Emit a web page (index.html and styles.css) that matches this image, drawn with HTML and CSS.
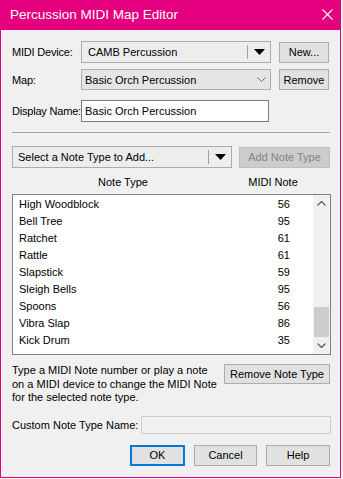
FILE: index.html
```html
<!DOCTYPE html>
<html lang="en">
<head>
    <meta charset="UTF-8">
    <title>Percussion MIDI Map Editor</title>
    <link rel="stylesheet" href="styles.css">
</head>
<body>

    <div class="window">
        <div class="titlebar">
            <span class="title">Percussion MIDI Map Editor</span>
            <svg class="close" width="11" height="11" viewBox="0 0 11 11">
                <path d="M0.5 0.5 L10.5 10.5 M10.5 0.5 L0.5 10.5" stroke="#fff" stroke-width="1.1" fill="none"/>
            </svg>
        </div>

        <div class="content">
            <div class="row row-device">
                <span class="field-label">MIDI Device:</span>
                <div class="combo combo-split combo-device">
                    <span class="combo-text">CAMB Percussion</span>
                    <span class="split-arrow">
                        <svg width="11" height="6" viewBox="0 0 11 6"><path d="M0 0 H11 L5.5 6 Z" fill="#000"/></svg>
                    </span>
                </div>
                <button class="btn btn-side">New...</button>
            </div>

            <div class="row row-map">
                <span class="field-label">Map:</span>
                <div class="combo combo-map">
                    <span class="combo-text">Basic Orch Percussion</span>
                    <svg class="chevron" width="9" height="5" viewBox="0 0 9 5"><path d="M0.5 0.5 L4.5 4.5 L8.5 0.5" stroke="#707070" stroke-width="1" fill="none"/></svg>
                </div>
                <button class="btn btn-side">Remove</button>
            </div>

            <div class="row row-name">
                <span class="field-label">Display Name:</span>
                <div class="textbox textbox-name">Basic Orch Percussion</div>
            </div>

            <div class="separator"></div>

            <div class="row row-add">
                <div class="combo combo-split combo-notetype">
                    <span class="combo-text">Select a Note Type to Add...</span>
                    <span class="split-arrow">
                        <svg width="11" height="6" viewBox="0 0 11 6"><path d="M0 0 H11 L5.5 6 Z" fill="#000"/></svg>
                    </span>
                </div>
                <button class="btn btn-add" disabled>Add Note Type</button>
            </div>

            <div class="list-header">
                <span class="col-name">Note Type</span>
                <span class="col-note">MIDI Note</span>
            </div>

            <div class="listbox">
                <div class="list-rows">
                    <div class="item"><span class="item-name">High Woodblock</span><span class="item-note">56</span></div>
                    <div class="item"><span class="item-name">Bell Tree</span><span class="item-note">95</span></div>
                    <div class="item"><span class="item-name">Ratchet</span><span class="item-note">61</span></div>
                    <div class="item"><span class="item-name">Rattle</span><span class="item-note">61</span></div>
                    <div class="item"><span class="item-name">Slapstick</span><span class="item-note">59</span></div>
                    <div class="item"><span class="item-name">Sleigh Bells</span><span class="item-note">95</span></div>
                    <div class="item"><span class="item-name">Spoons</span><span class="item-note">56</span></div>
                    <div class="item"><span class="item-name">Vibra Slap</span><span class="item-note">86</span></div>
                    <div class="item"><span class="item-name">Kick Drum</span><span class="item-note">35</span></div>
                </div>
                <div class="scrollbar">
                    <div class="scroll-arrow">
                        <svg width="9" height="5" viewBox="0 0 9 5"><path d="M0.5 4.5 L4.5 0.5 L8.5 4.5" stroke="#606060" stroke-width="1.3" fill="none"/></svg>
                    </div>
                    <div class="scroll-track">
                        <div class="scroll-thumb"></div>
                    </div>
                    <div class="scroll-arrow">
                        <svg width="9" height="5" viewBox="0 0 9 5"><path d="M0.5 0.5 L4.5 4.5 L8.5 0.5" stroke="#606060" stroke-width="1.3" fill="none"/></svg>
                    </div>
                </div>
            </div>

            <div class="row row-info">
                <p class="info-text">Type a MIDI Note number or play a note<br>on a MIDI device to change the MIDI Note<br>for the selected note type.</p>
                <button class="btn btn-remove-type">Remove Note Type</button>
            </div>

            <div class="row row-custom">
                <span class="custom-label">Custom Note Type Name:</span>
                <div class="textbox textbox-custom"></div>
            </div>

            <div class="row row-buttons">
                <button class="btn btn-ok">OK</button>
                <button class="btn btn-cancel">Cancel</button>
                <button class="btn btn-help">Help</button>
            </div>
        </div>
    </div>

</body>
</html>
```

FILE: styles.css
```css
body {
    margin: 0;
    background: #f0f0f0;
    font-family: 'Liberation Sans', Arial, sans-serif;
    font-size: 11px;
    color: #000000;
}

.window {
    box-sizing: border-box;
    width: 341px;
    height: 478px;
    border: 1px solid #e4007f;
    border-top: none;
    background: #f0f0f0;
}

/* title bar */
.titlebar {
    display: flex;
    align-items: center;
    justify-content: space-between;
    height: 30px;
    margin: 0 -1px;
    padding: 0 8px 0 10px;
    background: #e4007f;
    color: #ffffff;
    font-size: 13.5px;
}

.title {
    margin-top: -1px;
}

.close {
    margin-top: -1px;
}

.content {
    padding: 11px 10px 0 11px;
}

.row {
    display: flex;
    align-items: center;
    white-space: nowrap;
}

.field-label {
    width: 69px;
    flex-shrink: 0;
    letter-spacing: -0.2px;
}

/* combo boxes */
.combo {
    box-sizing: border-box;
    display: flex;
    align-items: center;
    border: 1px solid #adadad;
    background: #e5e5e5;
}

.combo-split {
    background: #ededed;
}

.combo-device {
    width: 190px;
    height: 22px;
    padding-left: 6px;
}

.combo-map {
    width: 190px;
    height: 21px;
    padding-left: 3px;
}

.combo-notetype {
    width: 220px;
    height: 22px;
    padding-left: 5px;
}

.combo-text {
    flex: 1;
}

.split-arrow {
    display: flex;
    align-items: center;
    justify-content: center;
    width: 22px;
    height: 14px;
    border-left: 1px solid #a0a0a0;
}

.chevron {
    margin-right: 4px;
}

/* buttons */
.btn {
    box-sizing: border-box;
    height: 21px;
    padding: 0;
    border: 1px solid #adadad;
    background: #e1e1e1;
    font-family: inherit;
    font-size: 11px;
    color: #000000;
}

.btn-side {
    width: 50px;
    margin-left: 8px;
}

.btn-add {
    width: 91px;
    margin-left: 7px;
    background: #cccccc;
    border-color: #bfbfbf;
    color: #838383;
}

/* text boxes */
.textbox {
    box-sizing: border-box;
    display: flex;
    align-items: center;
    border: 1px solid #7a7a7a;
    background: #ffffff;
}

.textbox-name {
    width: 188px;
    height: 22px;
    padding-left: 3px;
}

.textbox-custom {
    width: 190px;
    height: 18px;
    margin-right: -1px;
    border-color: #cccccc;
    background: #f0f0f0;
}

.row-device {
    height: 22px;
}

.row-map {
    height: 21px;
    margin-top: 6px;
}

.row-name {
    height: 22px;
    margin-top: 10px;
}

.separator {
    height: 0;
    margin-top: 10px;
    border-top: 1px solid #a0a0a0;
}

.row-add {
    height: 22px;
    margin-top: 13px;
}

/* note list */
.list-header {
    display: flex;
    height: 16px;
    margin-top: 6px;
    line-height: 16px;
}

.col-name {
    width: 222px;
    text-align: center;
}

.col-note {
    width: 78px;
    text-align: center;
}

.listbox {
    box-sizing: border-box;
    display: flex;
    height: 161px;
    margin-top: 4px;
    margin-right: -1px;
    border: 1px solid #828282;
    background: #ffffff;
}

.list-rows {
    flex: 1;
    padding-top: 1px;
}

.item {
    display: flex;
    height: 17px;
    line-height: 17px;
}

.item-name {
    flex: 1;
    padding-left: 6px;
}

.item-note {
    padding-right: 23px;
}

.scrollbar {
    display: flex;
    flex-direction: column;
    width: 17px;
    background: #f0f0f0;
}

.scroll-arrow {
    display: flex;
    align-items: center;
    justify-content: center;
    height: 17px;
}

.scroll-track {
    flex: 1;
    display: flex;
    flex-direction: column;
    justify-content: flex-end;
}

.scroll-thumb {
    height: 30px;
    margin: 0 1px;
    background: #cdcdcd;
}

/* bottom part */
.row-info {
    align-items: flex-start;
    margin-top: 9px;
}

.info-text {
    flex: 1;
    margin: 0;
    line-height: 13.5px;
}

.btn-remove-type {
    width: 106px;
    height: 20px;
}

.row-custom {
    height: 18px;
    margin-top: 11px;
}

.custom-label {
    width: 129px;
}

.row-buttons {
    justify-content: flex-end;
    margin-top: 11px;
}

.btn-ok {
    width: 55px;
    border: 2px solid #0078d7;
}

.btn-cancel {
    width: 63px;
    margin-left: 9px;
}

.btn-help {
    width: 64px;
    margin-left: 9px;
}
```
